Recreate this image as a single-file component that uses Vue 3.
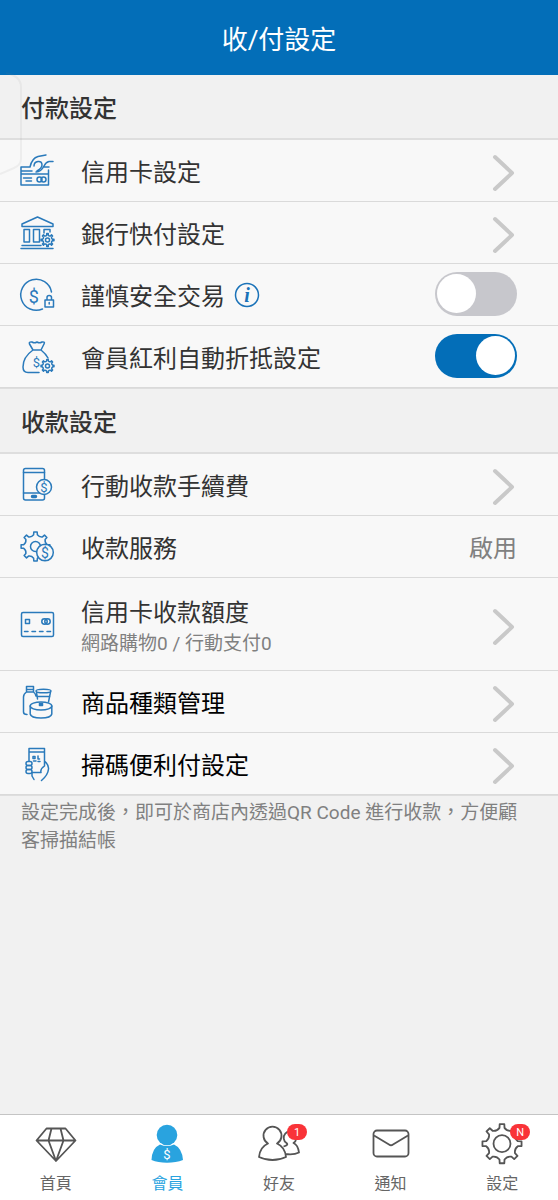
<script setup>
import { ref } from 'vue'

const safeTrade = ref(false)
const bonusOffset = ref(true)

// Outline of a cog with rounded teeth, centred on (cx, cy).
function gear(cx, cy, outer, inner, teeth = 8) {
  const step = (Math.PI * 2) / teeth
  const at = (r, a) => `${(cx + r * Math.sin(a)).toFixed(2)} ${(cy - r * Math.cos(a)).toFixed(2)}`
  let d = ''
  for (let i = 0; i < teeth; i++) {
    const a = i * step
    d += `${i ? 'L' : 'M'}${at(outer, a - step * 0.15)}L${at(outer, a + step * 0.15)}`
    d += `L${at(inner + (outer - inner) * 0.25, a + step * 0.2)}`
    d += `Q${at(inner - (outer - inner) * 0.3, a + step * 0.5)} ${at(inner + (outer - inner) * 0.25, a + step * 0.8)}`
  }
  return d + 'Z'
}
</script>

<template>
  <div class="page">
    <header class="topbar"><h1>收/付設定</h1></header>
    <svg class="edge" viewBox="0 0 24 104" aria-hidden="true">
      <path d="M6 2Q21 5 21 16V88Q21 94 14 97L0 103" />
    </svg>

    <main>
      <section>
        <h2>付款設定</h2>
        <ul>
          <li>
            <button class="row" type="button">
              <svg class="icon" viewBox="0 0 36 35" aria-hidden="true">
                <path d="M11 14H2V32H29.500V17M2 18H13M2 21H29.500M11 14Q13 5 19 3.500L27 2M15 13Q15 9 19 8.500Q23 8 23 12Q23 15 18 18M34 8.500H30Q27 9 25 13Q22 19 17 19M25 14H30M4.500 25H12.500M7 28H12.500" />
                <rect x="18" y="24" width="5" height="5" rx="2.500" /><rect x="22" y="24" width="5" height="5" rx="2.500" />
              </svg>
              <span class="label">信用卡設定</span>
              <svg class="chevron" viewBox="0 0 24 38" aria-hidden="true"><path d="M3 3L20 19L3 35" /></svg>
            </button>
          </li>
          <li>
            <button class="row" type="button">
              <svg class="icon" viewBox="0 0 36 35" aria-hidden="true">
                <path d="M3 9L18.500 2L34 9V11.500H3ZM5 14.500H10.500V27H5ZM14.500 14.500H20.500V27H14.500ZM25 18V14.500H31V17M3 30.500H22M2 33.500H34" />
                <path :d="gear(28.500, 25, 6.500, 4.500)" /><circle cx="28.500" cy="25" r="2" />
              </svg>
              <span class="label">銀行快付設定</span>
              <svg class="chevron" viewBox="0 0 24 38" aria-hidden="true"><path d="M3 3L20 19L3 35" /></svg>
            </button>
          </li>
          <li class="row">
            <svg class="icon" viewBox="0 0 36 35" aria-hidden="true">
              <path d="M32.500 15A15.500 15.500 0 1 0 23.500 32M26 23H34.500V30H26ZM28 23V20.500Q28 18.500 30.200 18.500Q32.500 18.500 32.500 20.500V23M30.200 25.500V27" />
              <text x="14.800" y="25.500" font-size="18">$</text>
            </svg>
            <label class="label" for="safe">謹慎安全交易</label>
            <button class="info" type="button" aria-label="說明">
              <svg viewBox="0 0 26 26" aria-hidden="true"><circle cx="13" cy="13" r="11.500" /><text x="13" y="19.500">i</text></svg>
            </button>
            <input id="safe" v-model="safeTrade" class="switch" type="checkbox" role="switch" />
          </li>
          <li class="row">
            <svg class="icon" viewBox="0 0 36 35" aria-hidden="true">
              <path d="M14 11L10.500 5Q9.500 2.500 13 3Q15.500 4.500 18 3Q20.500 4.500 23 3Q26.500 2.500 25 5L22 11ZM14 11Q4 18 4 28Q4 33.500 9 33.500H20M22 11Q27 15 29 19" />
              <text x="17.300" y="27.500" font-size="13">$</text>
              <path :d="gear(28.500, 27, 6.500, 4.800)" /><circle cx="28.500" cy="27" r="2" />
            </svg>
            <label class="label" for="bonus">會員紅利自動折抵設定</label>
            <input id="bonus" v-model="bonusOffset" class="switch" type="checkbox" role="switch" />
          </li>
        </ul>
      </section>

      <section>
        <h2>收款設定</h2>
        <ul>
          <li>
            <button class="row" type="button">
              <svg class="icon" viewBox="0 0 36 35" aria-hidden="true">
                <rect x="4.500" y="1.500" width="21" height="31.500" rx="2" />
                <path d="M4.500 5.500H25.500M4.500 26H25.500" /><rect class="solid" x="12.500" y="28.500" width="5" height="2" rx="1" />
                <circle class="coin" cx="25" cy="20" r="7.500" /><text x="25" y="24.800" font-size="13">$</text>
              </svg>
              <span class="label">行動收款手續費</span>
              <svg class="chevron" viewBox="0 0 24 38" aria-hidden="true"><path d="M3 3L20 19L3 35" /></svg>
            </button>
          </li>
          <li class="row">
            <svg class="icon" viewBox="0 0 36 35" aria-hidden="true">
              <path :d="gear(16.500, 17.500, 14.500, 11)" /><circle cx="16.500" cy="17.500" r="5" />
              <circle class="coin" cx="26" cy="23.500" r="8.300" /><text x="26" y="28.500" font-size="14">$</text>
            </svg>
            <span class="label">收款服務</span>
            <span class="value">啟用</span>
          </li>
          <li>
            <button class="row tall" type="button">
              <svg class="icon" viewBox="0 0 36 35" aria-hidden="true">
                <rect x="2.500" y="5.500" width="32" height="24" rx="1.500" /><rect x="6.500" y="12.500" width="4" height="4" />
                <circle cx="25.500" cy="14.500" r="2.700" /><circle cx="28.500" cy="14.500" r="2.700" />
                <path d="M5.500 24.500H9M13 24.500H16.500M20.500 24.500H24M28 24.500H31.500" />
              </svg>
              <span class="label">信用卡收款額度<small>網路購物0 / 行動支付0</small></span>
              <svg class="chevron" viewBox="0 0 24 38" aria-hidden="true"><path d="M3 3L20 19L3 35" /></svg>
            </button>
          </li>
          <li>
            <button class="row strong" type="button">
              <svg class="icon" viewBox="0 0 36 35" aria-hidden="true">
                <path d="M7.500 2.500H14.500V8H7.500ZM7.500 5.500H14.500M7.500 8Q4.500 10 4.500 13V28Q4.500 30.500 8 30.500M14.500 8Q16.500 9.500 17 12M17.500 8L18.500 15M31.500 8L29.500 18" />
                <ellipse cx="24.500" cy="7" rx="7.500" ry="1.800" />
                <ellipse cx="22" cy="22" rx="10.800" ry="4" />
                <path d="M11.200 22V30Q12 34 22 34T32.800 30V22M18.500 12.500H30.500" />
                <rect class="solid" x="20.500" y="19.500" width="3" height="2" />
              </svg>
              <span class="label">商品種類管理</span>
              <svg class="chevron" viewBox="0 0 24 38" aria-hidden="true"><path d="M3 3L20 19L3 35" /></svg>
            </button>
          </li>
          <li>
            <button class="row strong" type="button">
              <svg class="icon" viewBox="0 0 36 35" aria-hidden="true">
                <path d="M10 15V2.500H25.500V20M10 6H25.500M14 10.500H16V12.500H14ZM19 10V13H20.500M14.500 15H17M19 15.500H21M25.500 15Q30 19 29.500 23Q29 29 22.500 34.500M25.500 20Q21 23 22 26.500H13M13 27V30L15 33.500" />
                <rect x="7" y="15.500" width="6" height="4" rx="2" /><rect x="7" y="19.500" width="6" height="4" rx="2" /><rect x="7" y="23.500" width="6" height="4" rx="2" />
              </svg>
              <span class="label">掃碼便利付設定</span>
              <svg class="chevron" viewBox="0 0 24 38" aria-hidden="true"><path d="M3 3L20 19L3 35" /></svg>
            </button>
          </li>
        </ul>
      </section>
      <p class="note">設定完成後，即可於商店內透過QR Code 進行收款，方便顧客掃描結帳</p>
    </main>

    <nav class="tabs">
      <a href="#home">
        <span class="tab-icon">
          <svg viewBox="0 0 44 44" aria-hidden="true"><path d="M12.500 6.500H31.500L41.500 18.500L22 39L2.500 18.500ZM2.500 18.500H41.500M17.500 6.500L14.500 18.500L22 39L29.500 18.500L26.500 6.500" /></svg>
        </span>首頁
      </a>
      <a href="#member" class="active" aria-current="page">
        <span class="tab-icon">
          <svg viewBox="0 0 44 44" aria-hidden="true">
            <circle cx="22" cy="13" r="10.300" /><path d="M15 22.500Q22 25.500 29 22.500Q37 26 38 38Q31 40.800 22 40.800T6.500 38Q7 26 15 22.500Z" />
            <text x="22" y="36.500">$</text>
          </svg>
        </span>會員
      </a>
      <a href="#friends">
        <span class="tab-icon">
          <svg viewBox="0 0 44 44" aria-hidden="true">
            <path d="M11 21.500A9 9 0 1 1 20 21.500Q28 25 29 35Q23 38 15.500 38T2 35Q3 25 11 21.500ZM26.500 24.500Q32 23 29.500 21A6.300 6.300 0 1 1 36.500 21Q41 23 42 30.500Q37 33 28.500 32" />
          </svg>
          <b class="badge">1</b>
        </span>好友
      </a>
      <a href="#notices">
        <span class="tab-icon">
          <svg viewBox="0 0 44 44" aria-hidden="true"><rect x="4.500" y="8.500" width="35" height="26" rx="3.500" /><path d="M5 13.500L20 22.500Q22 24 24 22.500L39 13.500" /></svg>
        </span>通知
      </a>
      <a href="#settings">
        <span class="tab-icon">
          <svg viewBox="0 0 44 44" aria-hidden="true"><path :d="gear(22, 21.700, 19.700, 14.800)" /><circle cx="22" cy="21.700" r="8.500" /></svg>
          <b class="badge">N</b>
        </span>設定
      </a>
    </nav>
  </div>
</template>

<style>
body {
  margin: 0;
  background: #f1f1f1;
}
</style>

<style scoped>
.page {
  position: relative;
  display: flex;
  flex-direction: column;
  min-height: 100vh;
  font-family: Roboto, "Noto Sans CJK TC", sans-serif;
  color: #333;
  background: #f1f1f1;
}
.topbar {
  display: flex;
  align-items: center;
  justify-content: center;
  height: 75px;
  padding-top: 4px;
  box-sizing: border-box;
  background: #036eb8;
  color: #fff;
}
h1 {
  margin: 0;
  font-size: 26px;
  font-weight: 400;
  line-height: 36px;
}
.edge {
  position: absolute;
  top: 71px;
  left: 0;
  width: 24px;
  height: 104px;
  fill: none;
  stroke: #888;
  stroke-opacity: 0.09;
  stroke-width: 2;
  pointer-events: none;
}
main {
  flex: 1;
}
h2 {
  box-sizing: border-box;
  height: 65px;
  margin: 0;
  padding: 2px 21px 0;
  border-bottom: 2px solid #dedede;
  font-size: 24px;
  font-weight: 500;
  line-height: 65px;
}
ul {
  margin: 0;
  padding: 0;
  list-style: none;
  border-bottom: 1px solid #dedede;
}
.row {
  display: flex;
  align-items: center;
  box-sizing: border-box;
  width: 100%;
  min-height: 62px;
  margin: 0;
  padding: 0 41px 0 19px;
  border: 0;
  border-bottom: 1px solid #dadada;
  background: #f8f8f8;
  color: #333;
  font: inherit;
  font-size: 24px;
  line-height: 36px;
  text-align: left;
}
.row.tall {
  min-height: 93px;
}
.row.strong {
  color: #000;
}
.icon {
  flex: none;
  width: 36px;
  height: 35px;
  margin-right: 26px;
  overflow: visible;
  fill: none;
  stroke: #2a7abb;
  stroke-width: 1.5;
  stroke-linecap: round;
  stroke-linejoin: round;
}
.icon text {
  fill: #2a7abb;
  stroke: none;
  text-anchor: middle;
}
.icon .solid {
  fill: #2a7abb;
}
.icon .coin {
  fill: #f8f8f8;
}
.label,
.value {
  padding-top: 4px;
}
.label small {
  display: block;
  color: #808080;
  font-size: 19px;
  line-height: 26px;
}
.chevron {
  flex: none;
  width: 24px;
  height: 38px;
  margin-left: auto;
  margin-right: 1px;
  padding-top: 5px;
  fill: none;
  stroke: #c9c9c9;
  stroke-width: 4;
  stroke-linecap: round;
  stroke-linejoin: round;
}
.value {
  margin-left: auto;
  color: #808080;
}
.info {
  width: 26px;
  height: 26px;
  margin-left: 9px;
  padding: 0;
  border: 0;
  background: none;
}
.info svg {
  display: block;
  fill: none;
  stroke: #1a72b8;
  stroke-width: 1.5;
}
.info text {
  fill: #1a72b8;
  stroke: none;
  font: italic bold 20px "Liberation Serif", serif;
  text-anchor: middle;
}
.switch {
  appearance: none;
  display: flex;
  align-items: center;
  box-sizing: border-box;
  width: 82px;
  height: 44px;
  margin: 0 0 2px auto;
  padding: 2px;
  border-radius: 22px;
  background: #c7c7cc;
}
.switch::before {
  content: "";
  width: 39px;
  height: 39px;
  border-radius: 50%;
  background: #fff;
}
.switch:checked {
  justify-content: flex-end;
  background: #036eb8;
}
.note {
  margin: 0;
  padding: 3px 30px 0 21px;
  color: #808080;
  font-size: 19px;
  line-height: 28px;
}
.tabs {
  display: grid;
  grid-template-columns: repeat(5, 1fr);
  box-sizing: border-box;
  height: 86px;
  border-top: 1px solid #c4c4c4;
  background: #fff;
}
.tabs a {
  display: flex;
  flex-direction: column;
  align-items: center;
  gap: 6px;
  padding-top: 7px;
  color: #666;
  font-size: 16px;
  line-height: 24px;
  text-decoration: none;
}
.tab-icon {
  position: relative;
  width: 44px;
  height: 44px;
}
.tab-icon svg {
  display: block;
  fill: none;
  stroke: #555;
  stroke-width: 1.8;
  stroke-linejoin: round;
}
.tabs .active {
  color: #29a3df;
}
.active svg {
  fill: #29a3df;
  stroke: none;
}
.active text {
  fill: #fff;
  font-size: 13px;
  text-anchor: middle;
}
.badge {
  position: absolute;
  top: 2px;
  left: 30px;
  width: 20px;
  height: 16px;
  border-radius: 8px;
  background: #f93338;
  color: #fff;
  font-size: 11px;
  font-weight: 400;
  line-height: 17px;
  text-align: center;
}
</style>
